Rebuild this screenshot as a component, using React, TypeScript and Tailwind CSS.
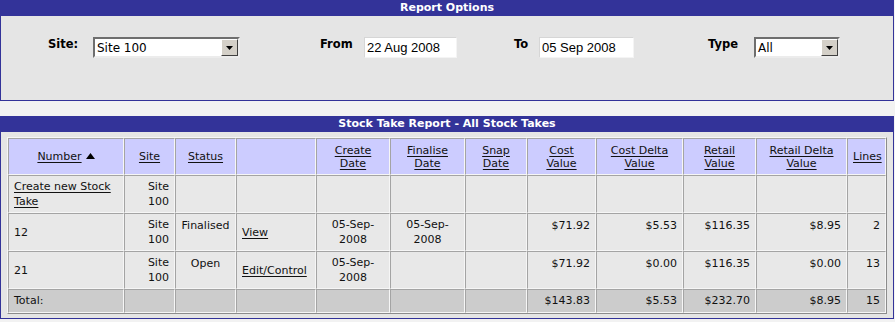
import React from 'react'

const sans = "font-['DejaVu_Sans',Verdana,sans-serif]"
const arial = "font-['Liberation_Sans',Arial,sans-serif]"

const cell =
  'border border-t-[#a4a4a4] border-l-[#a4a4a4] border-r-[#f6f6f6] border-b-[#f6f6f6] px-[5px]'
const head = `${cell} bg-[#ccccff] text-center align-middle font-normal leading-[13px]`
const body = `${cell} bg-[#e8e8e8] leading-[15px]`
const total = `${cell} bg-[#cccccc] align-middle`

type Row = {
  number: string
  status: string
  action: string
  created: string
  finalised: string
  cost: string
  costDelta: string
  retail: string
  retailDelta: string
  lines: string
}

const rows: Row[] = [
  {
    number: '12',
    status: 'Finalised',
    action: 'View',
    created: '05-Sep-2008',
    finalised: '05-Sep-2008',
    cost: '$71.92',
    costDelta: '$5.53',
    retail: '$116.35',
    retailDelta: '$8.95',
    lines: '2',
  },
  {
    number: '21',
    status: 'Open',
    action: 'Edit/Control',
    created: '05-Sep-2008',
    finalised: '',
    cost: '$71.92',
    costDelta: '$0.00',
    retail: '$116.35',
    retailDelta: '$0.00',
    lines: '13',
  },
]

function Select({ value, className }: { value: string; className: string }) {
  return (
    <div
      className={`flex h-[21px] items-center border-2 border-t-[#6e6e6e] border-l-[#6e6e6e] border-r-[#ececec] border-b-[#ececec] bg-white ${className}`}
    >
      <span className={`flex-1 pl-[2px] text-[12px] text-black ${sans}`}>{value}</span>
      <span className="flex h-[17px] w-[17px] items-center justify-center border border-t-white border-l-white border-r-[#404040] border-b-[#404040] bg-[#d4d0c8]">
        <svg width="7" height="4" viewBox="0 0 7 4">
          <path d="M0 0h7L3.5 4z" fill="#000" />
        </svg>
      </span>
    </div>
  )
}

function TextInput({ value, className }: { value: string; className: string }) {
  return (
    <div
      className={`flex h-[21px] items-center border border-t-[#d6d6d6] border-l-[#d6d6d6] border-r-[#f4f4f4] border-b-[#f4f4f4] bg-white pl-[2px] text-[13px] text-black ${arial} ${className}`}
    >
      {value}
    </div>
  )
}

function Label({ text, className }: { text: string; className: string }) {
  return (
    <div className={`text-[11.5px] font-bold leading-[16px] text-black ${sans} ${className}`}>
      {text}
    </div>
  )
}

function Link({ children }: { children: React.ReactNode }) {
  return <span className="text-[#111] underline underline-offset-2">{children}</span>
}

function Panel({ title, children }: { title: string; children: React.ReactNode }) {
  return (
    <div className="w-[894px] border border-[#333399] bg-[#e5e5e5]">
      <div
        className={`flex h-[15px] items-center justify-center bg-[#333399] text-[11px] font-bold text-white ${sans}`}
      >
        {title}
      </div>
      {children}
    </div>
  )
}

export default function App() {
  return (
    <div className={`min-h-screen bg-[#f2f2f2] ${sans}`}>
      <Panel title="Report Options">
        <div className="flex h-[84px] items-start pl-[47px] pt-[21px]">
          <Label text="Site:" className="-mt-[1px] w-[45px]" />
          <Select value="Site 100" className="w-[147px]" />
          <Label text="From" className="-mt-[1px] ml-[80px] w-[44px]" />
          <TextInput value="22 Aug 2008" className="w-[93px]" />
          <Label text="To" className="-mt-[1px] ml-[57px] w-[25px]" />
          <TextInput value="05 Sep 2008" className="w-[95px]" />
          <Label text="Type" className="-mt-[1px] ml-[74px] w-[46px]" />
          <Select value="All" className="w-[86px]" />
        </div>
      </Panel>

      <div className="mt-[15px]">
        <Panel title="Stock Take Report - All Stock Takes">
          <div className="px-[6px] pb-[4px] pt-[5px]">
            <table className="w-[880px] table-fixed border-separate border-spacing-0 border border-t-[#f6f6f6] border-l-[#f6f6f6] border-r-[#8c8c8c] border-b-[#8c8c8c] text-[11px] leading-[14px] text-[#111]">
              <colgroup>
                <col className="w-[116px]" />
                <col className="w-[51px]" />
                <col className="w-[61px]" />
                <col className="w-[80px]" />
                <col className="w-[74px]" />
                <col className="w-[75px]" />
                <col className="w-[62px]" />
                <col className="w-[69px]" />
                <col className="w-[87px]" />
                <col className="w-[73px]" />
                <col className="w-[91px]" />
                <col className="w-[39px]" />
              </colgroup>
              <thead>
                <tr className="h-[37px]">
                  <th className={head}>
                    <Link>Number</Link>
                    <svg width="9" height="6" viewBox="0 0 9 6" className="ml-[4px] inline-block align-[1px]">
                      <path d="M0 6L4.5 0L9 6z" fill="#000" />
                    </svg>
                  </th>
                  <th className={head}><Link>Site</Link></th>
                  <th className={head}><Link>Status</Link></th>
                  <th className={head}></th>
                  <th className={head}><Link>Create Date</Link></th>
                  <th className={head}><Link>Finalise Date</Link></th>
                  <th className={head}><Link>Snap Date</Link></th>
                  <th className={head}><Link>Cost Value</Link></th>
                  <th className={head}><Link>Cost Delta Value</Link></th>
                  <th className={head}><Link>Retail Value</Link></th>
                  <th className={head}><Link>Retail Delta Value</Link></th>
                  <th className={head}><Link>Lines</Link></th>
                </tr>
              </thead>
              <tbody>
                <tr className="h-[38px]">
                  <td className={`${body} align-middle`}>
                    <Link>Create new Stock Take</Link>
                  </td>
                  <td className={`${body} text-right align-middle`}>Site 100</td>
                  <td className={body}></td>
                  <td className={body}></td>
                  <td className={body}></td>
                  <td className={body}></td>
                  <td className={body}></td>
                  <td className={body}></td>
                  <td className={body}></td>
                  <td className={body}></td>
                  <td className={body}></td>
                  <td className={body}></td>
                </tr>
                {rows.map((r) => (
                  <tr key={r.number} className="h-[38px]">
                    <td className={`${body} align-middle`}>{r.number}</td>
                    <td className={`${body} text-right align-middle`}>Site 100</td>
                    <td className={`${body} pt-[4px] text-center align-top`}>{r.status}</td>
                    <td className={`${body} align-middle`}>
                      <Link>{r.action}</Link>
                    </td>
                    <td className={`${body} text-center align-middle`}>{r.created}</td>
                    <td className={`${body} text-center align-middle`}>{r.finalised}</td>
                    <td className={body}></td>
                    <td className={`${body} pt-[4px] text-right align-top`}>{r.cost}</td>
                    <td className={`${body} pt-[4px] text-right align-top`}>{r.costDelta}</td>
                    <td className={`${body} pt-[4px] text-right align-top`}>{r.retail}</td>
                    <td className={`${body} pt-[4px] text-right align-top`}>{r.retailDelta}</td>
                    <td className={`${body} pt-[4px] text-right align-top`}>{r.lines}</td>
                  </tr>
                ))}
                <tr className="h-[24px]">
                  <td className={total}>Total:</td>
                  <td className={total}></td>
                  <td className={total}></td>
                  <td className={total}></td>
                  <td className={total}></td>
                  <td className={total}></td>
                  <td className={total}></td>
                  <td className={`${total} text-right`}>$143.83</td>
                  <td className={`${total} text-right`}>$5.53</td>
                  <td className={`${total} text-right`}>$232.70</td>
                  <td className={`${total} text-right`}>$8.95</td>
                  <td className={`${total} text-right`}>15</td>
                </tr>
              </tbody>
            </table>
          </div>
        </Panel>
      </div>
    </div>
  )
}
